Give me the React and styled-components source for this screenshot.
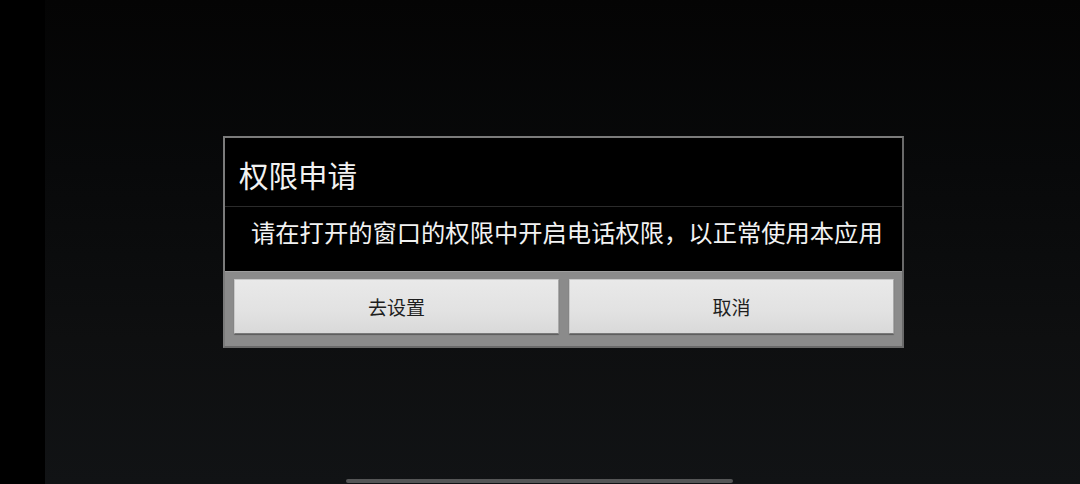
import React from "react";
import styled, { createGlobalStyle } from "styled-components";

const GlobalStyle = createGlobalStyle`
  html, body {
    margin: 0;
    padding: 0;
    background: #000;
  }
  body {
    font-family: "Noto Sans CJK SC", "Noto Sans", sans-serif;
  }
`;

const Frame = styled.div`
  display: flex;
  width: 1080px;
  height: 484px;
  overflow: hidden;
`;

const Bezel = styled.div`
  width: 45px;
  flex-shrink: 0;
  background: #000;
`;

const Screen = styled.div`
  flex: 1;
  display: flex;
  flex-direction: column;
  background: linear-gradient(180deg, #040404 0%, #08090a 35%, #0e0f10 70%, #111315 100%);
`;

const Dialog = styled.div`
  margin: 136px 0 0 178px;
  width: 681px;
  box-sizing: border-box;
  border: 2px solid #7b7b7b;
  border-right-color: #6a6a6a;
  border-bottom-color: #6a6a6a;
  background: #000;
  display: flex;
  flex-direction: column;
`;

const Title = styled.div`
  height: 69px;
  box-sizing: border-box;
  padding: 17px 0 0 14px;
  border-bottom: 1px solid #2b2b2b;
  color: #f2f2f2;
  font-size: 29.5px;
  line-height: 38px;
`;

const Message = styled.div`
  height: 64px;
  box-sizing: border-box;
  padding: 8px 0 0 26px;
  color: #f2f2f2;
  font-size: 24.3px;
  line-height: 34px;
  white-space: nowrap;
`;

const ButtonBar = styled.div`
  display: flex;
  gap: 10px;
  padding: 7px 8px 12px 9px;
  background: #8b8b8b;
  border-top: 1px solid #9d9d9d;
`;

const Button = styled.button`
  flex: 1;
  height: 55px;
  border: 1px solid #c9c9c9;
  border-bottom-color: #7a7a7a;
  border-right-color: #a9a9a9;
  border-radius: 1px;
  background: linear-gradient(180deg, #e9e9e9 0%, #e2e2e2 60%, #d9d9d9 100%);
  box-shadow: 0 1px 1px rgba(0, 0, 0, 0.35);
  color: #1e1e1e;
  font-family: "Noto Sans CJK SC", "Noto Sans", sans-serif;
  font-size: 19px;
  padding: 0;
  cursor: pointer;
`;

const HomeBar = styled.div`
  margin: auto 0 1px 301px;
  width: 387px;
  height: 4px;
  border-radius: 2px;
  background: #555657;
`;

export default function App() {
  return (
    <Frame>
      <GlobalStyle />
      <Bezel />
      <Screen>
        <Dialog>
          <Title>权限申请</Title>
          <Message>请在打开的窗口的权限中开启电话权限，以正常使用本应用</Message>
          <ButtonBar>
            <Button>去设置</Button>
            <Button>取消</Button>
          </ButtonBar>
        </Dialog>
        <HomeBar />
      </Screen>
    </Frame>
  );
}
